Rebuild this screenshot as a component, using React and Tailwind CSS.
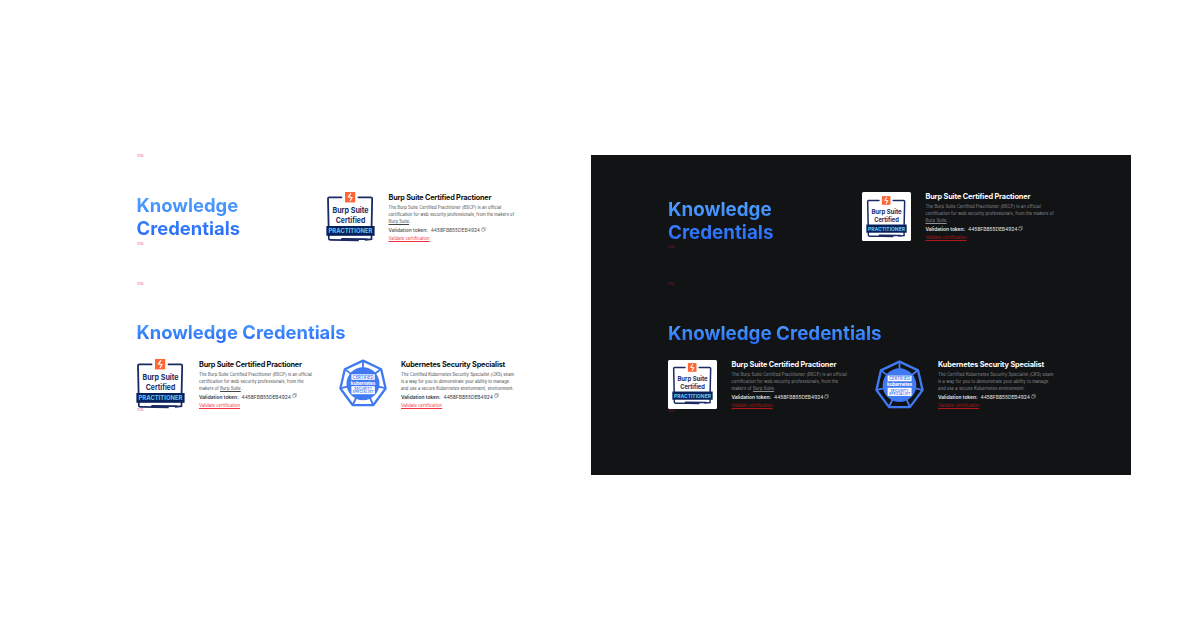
function BurpBadge({ className }) {
  return (
    <svg viewBox="0 0 49 50" className={`overflow-visible ${className}`} fontFamily="Inter, sans-serif" textAnchor="middle">
      <path d="M15.5 5.3H3.2Q2 5.3 2 6.5L2.6 34M32.5 5.3H44.8Q46.2 5.3 46.2 6.6L45.6 34" fill="none" stroke="#1b2a63" strokeWidth="1.8" strokeLinecap="round" />
      <path d="M2.8 42V46.6Q2.8 48 4.6 47.9L32 48.4M39.5 47.9L45.5 47.2V42M16 46.8L41 47.2" fill="none" stroke="#1b2a63" strokeWidth="1.7" strokeLinecap="round" />
      <rect x="19" y="0" width="10.2" height="10.4" fill="#ff6633" />
      <path d="M24.9 1.4L22.4 4.9 26 5.7 23.9 9" fill="none" stroke="#fff" strokeWidth="1.2" />
      <text x="24.5" y="21.4" fontSize="7.5" fontWeight="700" fill="#1b2a63" textLength="36" lengthAdjust="spacingAndGlyphs">Burp Suite</text>
      <text x="24.5" y="30.8" fontSize="7.5" fontWeight="700" fill="#1b2a63" textLength="29.5" lengthAdjust="spacingAndGlyphs">Certified</text>
      <rect x=".4" y="34" width="48.2" height="9.8" fill="#06215c" />
      <text x="24.5" y="41.2" fontSize="6.3" fontWeight="700" fill="#65c8f4" textLength="44" lengthAdjust="spacingAndGlyphs">PRACTITIONER</text>
    </svg>
  );
}

function KubernetesBadge({ className, field }) {
  return (
    <svg viewBox="0 0 48 48" className={className} fontFamily="Inter, sans-serif" textAnchor="middle">
      <path d="M24 1.6L42.2 10.2 46.6 29.5 34.2 46.2H13.8L1.4 29.5 5.8 10.2Z" fill={field} stroke="#4079f2" strokeWidth="2.3" strokeLinejoin="round" />
      <path d="M24 2V24L42 10M24 24L46 29.2M24 24L34 45.5M24 24L14 45.5M24 24L2 29.2M24 24L6 10.4" fill="none" stroke="#4079f2" strokeWidth="1.8" />
      <circle cx="24" cy="24.7" r="16.5" fill="#4079f2" />
      <rect x="12.4" y="15.3" width="23.4" height="5.5" fill="#fff" />
      <text x="24.1" y="19.7" fontSize="4.2" fontWeight="600" fill="#4079f2" textLength="21">CERTIFIED</text>
      <text x="24.1" y="25.7" fontSize="4.7" fontWeight="700" fill="#fff" textLength="24.5">kubernetes</text>
      <rect x="12.4" y="27.2" width="23.4" height="8" fill="#fff" />
      <text x="24.1" y="30.9" fontSize="3.4" fontWeight="600" fill="#4079f2" textLength="18">SECURITY</text>
      <text x="24.1" y="34.4" fontSize="3.4" fontWeight="600" fill="#4079f2" textLength="21">SPECIALIST</text>
    </svg>
  );
}

function CopyIcon() {
  return (
    <svg viewBox="0 0 5 5" className="mb-[3px] ml-[1px] h-[5px] w-[5px] shrink-0 opacity-80" fill="none" stroke="currentColor" strokeWidth=".45">
      <path d="M1.4 1.4V.6H4.3V3.5H3.5" />
      <rect x=".7" y="1.5" width="2.7" height="2.8" rx=".4" />
    </svg>
  );
}

function Credential({ title, lines, dark, softToken = false }) {
  const tokenColor = dark ? "text-[#e8e8e8]" : softToken ? "text-[#4c4d50]" : "text-[#343537]";
  return (
    <div className="flex flex-col whitespace-nowrap">
      <h3 className={`h-[11px] text-[7.3px] leading-[11px] font-bold ${dark ? "tracking-[-0.135px] text-white" : "tracking-[-0.2px] text-[#111214]"}`}>{title}</h3>
      <p className={`mt-[1px] text-[4.15px] leading-[7px] ${dark ? "tracking-[0.08px] text-[#909193]" : "tracking-[0.04px] text-[#444547]"}`}>
        {lines.map((line, i) => (
          <span key={i} className="block h-[7px]">{line}</span>
        ))}
      </p>
      <div className={`mt-[1px] flex h-[9px] items-center text-[4.9px] leading-[9px] ${tokenColor}`}>
        <span className={softToken ? "font-medium tracking-[0.02px]" : "font-semibold"}>Validation token:</span>
        <span className="ml-[3px]">4458FB855DEB4924</span>
        <CopyIcon />
      </div>
      <a className={`h-[8px] text-[4.25px] leading-[8px] underline ${dark ? "text-[#b3151d]" : "text-[#f5303e]"}`}>Validate certification</a>
    </div>
  );
}

function Spacer({ dark, className }) {
  return <div className={`h-[4px] text-[3.8px] leading-[4px] font-medium ${dark ? "text-[#7a171f]" : "text-[#f4717e]"} ${className}`}>128</div>;
}

const heading = "bg-clip-text text-transparent bg-linear-to-b from-[#55a5ff] to-[#2563f8] font-bold";
const maker = <span className="underline">Burp Suite</span>;
const wideLines = ["The Burp Suite Certified Practitioner (BSCP) is an official", "certification for web security professionals, from the makers of", <>{maker}.</>];
const narrowLines = ["The Burp Suite Certified Practitioner (BSCP) is an official", "certification for web security professionals, from the", <>makers of {maker}.</>];
const lightKubernetes = ["The Certified Kubernetes Security Specialist (CKS) exam", "is a way for you to demonstrate your ability to manage", "and use a secure Kubernetes environment, environment."];
const darkKubernetes = ["The Certified Kubernetes Security Specialist (CKS) exam", "is a way for you to demonstrate your ability to manage", "and use a secure Kubernetes environment."];

export default function App() {
  return (
    <main className="flex h-[630px] w-[1200px] overflow-hidden bg-white pt-[153px] font-[Inter,sans-serif]">
      <section className="flex w-[591px] flex-col pl-[136px]">
        <Spacer className="mt-[1px] pl-[1px]" />
        <div className="flex h-[84px] items-start pt-[34px]">
          <h2 className={`mt-[2px] ml-[0.5px] h-[47px] w-[189px] text-[18.45px] leading-[23.4px] ${heading}`}>Knowledge<br />Credentials</h2>
          <BurpBadge className="h-[50px] w-[49px] shrink-0" />
          <div className="pl-[14px]"><Credential title="Burp Suite Certified Practioner" lines={wideLines} softToken /></div>
        </div>
        <Spacer className="pl-[1px]" />
        <Spacer className="mt-[36px] pl-[1px]" />
        <h2 className={`mt-[34px] ml-[0.5px] h-[24px] w-[240px] text-[18.4px] leading-[24px] whitespace-nowrap ${heading}`}>Knowledge Credentials</h2>
        <div className="mt-[15px] flex h-[50px] items-start">
          <BurpBadge className="h-[50px] w-[49px] shrink-0" />
          <div className="-mt-[0.5px] w-[154px] pl-[14px]"><Credential title="Burp Suite Certified Practioner" lines={narrowLines} /></div>
          <KubernetesBadge className="h-[48px] w-[48px] shrink-0" field="#ffffff" />
          <div className="-mt-[0.5px] pl-[14px]"><Credential title="Kubernetes Security Specialist" lines={lightKubernetes} /></div>
        </div>
        <Spacer className="-mt-[1px] pl-[1px]" />
      </section>
      <section className="mt-[2px] flex h-[320px] w-[540px] flex-col bg-[#111315] pl-[77px]">
        <div className="flex h-[90px] items-start pt-[37px]">
          <h2 className={`mt-[5.5px] h-[47px] w-[194px] text-[18.8px] leading-[23.5px] ${heading}`}>Knowledge<br />Credentials</h2>
          <div className="flex h-[49px] w-[49px] shrink-0 items-center justify-center rounded-[1.5px] bg-white"><BurpBadge className="h-[42px] w-[41px]" /></div>
          <div className="-mt-[0.6px] pl-[14.5px]"><Credential dark title="Burp Suite Certified Practioner" lines={wideLines} /></div>
        </div>
        <Spacer dark />
        <Spacer dark className="mt-[33px]" />
        <h2 className={`mt-[36px] h-[24px] w-[240px] text-[18.8px] leading-[24px] whitespace-nowrap ${heading}`}>Knowledge Credentials</h2>
        <div className="mt-[13.5px] flex h-[50px] items-start">
          <div className="flex h-[49px] w-[49px] shrink-0 items-center justify-center rounded-[1.5px] bg-white"><BurpBadge className="h-[42px] w-[41px]" /></div>
          <div className="-mt-[0.5px] w-[158px] pl-[14.5px]"><Credential dark title="Burp Suite Certified Practioner" lines={narrowLines} /></div>
          <KubernetesBadge className="h-[49px] w-[49px] shrink-0" field="#111315" />
          <div className="-mt-[0.5px] pl-[14px]"><Credential dark title="Kubernetes Security Specialist" lines={darkKubernetes} /></div>
        </div>
        <Spacer dark className="-mt-[1px]" />
      </section>
    </main>
  );
}
